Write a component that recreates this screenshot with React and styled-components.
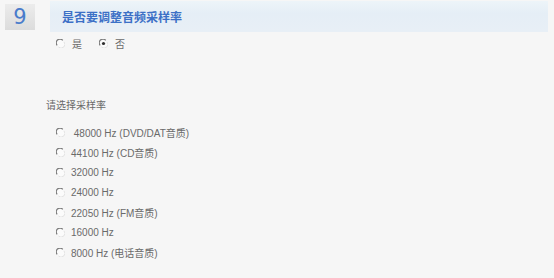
import React from "react";
import styled, { createGlobalStyle } from "styled-components";

const Global = createGlobalStyle`
  html, body { margin: 0; padding: 0; background: #f6f6f6; }
  body { font-family: "Liberation Sans", "Noto Sans CJK SC", sans-serif; }
`;

const Page = styled.div`
  width: 554px;
  height: 278px;
  background: #f6f6f6;
  box-sizing: border-box;
  padding: 1px 6px 0 5px;
`;

const Header = styled.div`
  display: flex;
  align-items: flex-start;
  gap: 15px;
`;

const NumBox = styled.div`
  width: 30px;
  height: 26px;
  margin-top: 3px;
  background: linear-gradient(to bottom, #ececec 0%, #dcdcdc 100%);
  display: flex;
  align-items: center;
  justify-content: center;
  font-family: "DejaVu Sans", sans-serif;
  font-size: 21px;
  color: #4a7ccb;
`;

const TitleBar = styled.div`
  flex: 1;
  height: 31px;
  background: linear-gradient(to bottom, #edf4f9 0%, #e5eef6 40%, #e8eff6 100%);
  display: flex;
  align-items: center;
  padding-left: 12px;
  box-sizing: border-box;
  font-family: "Noto Sans CJK SC", sans-serif;
  font-weight: bold;
  font-size: 12px;
  color: #3c70c6;
`;

const Inline = styled.div`
  display: flex;
  align-items: center;
  gap: 17px;
  padding-left: 51px;
  margin-top: 4px;
  height: 14px;
`;

const Choice = styled.label`
  display: flex;
  align-items: center;
  height: 14px;
  gap: ${p => p.$gap || 6}px;
  font-family: "Liberation Sans", "Noto Sans CJK SC", sans-serif;
  font-size: 10px;
  color: #6a6a6a;
  white-space: pre;
`;

const Prompt = styled.div`
  margin-top: 47px;
  padding-left: 41px;
  font-family: "Noto Sans CJK SC", sans-serif;
  font-size: 10px;
  color: #6a6a6a;
`;

const List = styled.div`
  display: flex;
  flex-direction: column;
  gap: 6px;
  padding-left: 51px;
  margin-top: 13px;
`;

const Radio = ({ checked }) => (
  <svg width="9" height="9" viewBox="0 0 9 9">
    <circle cx="4.5" cy="4.5" r="3.8" fill="#fbfbfb" />
    <path d="M1.2 6.4 A3.7 3.7 0 0 1 6.8 1.3" stroke="#7c7c7c" strokeWidth="1.2" fill="none" />
    <path d="M7.9 2.8 A3.7 3.7 0 0 1 2.4 7.9" stroke="#e2e2e2" strokeWidth="1" fill="none" />
    {checked && <circle cx="4.5" cy="4.5" r="1.6" fill="#2e2e2e" />}
  </svg>
);

const rates = [
  " 48000 Hz (DVD/DAT音质)",
  "44100 Hz (CD音质)",
  "32000 Hz",
  "24000 Hz",
  "22050 Hz (FM音质)",
  "16000 Hz",
  "8000 Hz (电话音质)",
];

export default function App() {
  return (
    <Page>
      <Global />
      <Header>
        <NumBox>9</NumBox>
        <TitleBar>是否要调整音频采样率</TitleBar>
      </Header>
      <Inline>
        <Choice $gap={7}><Radio />是</Choice>
        <Choice $gap={7}><Radio checked />否</Choice>
      </Inline>
      <Prompt>请选择采样率</Prompt>
      <List>
        {rates.map(r => (
          <Choice key={r}><Radio />{r}</Choice>
        ))}
      </List>
    </Page>
  );
}
